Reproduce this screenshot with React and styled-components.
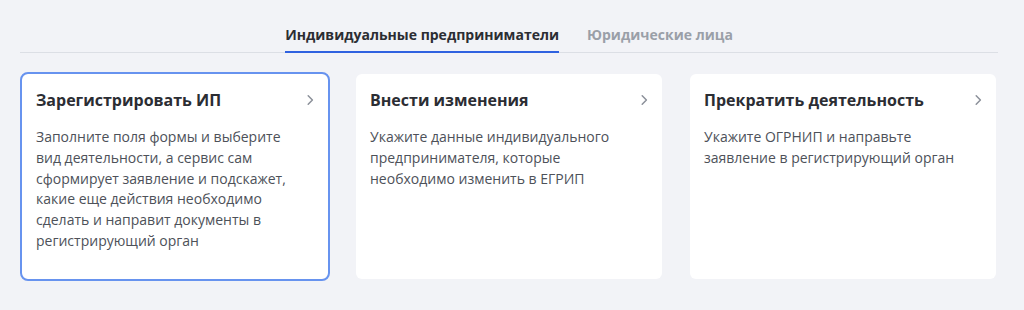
import React from 'react'
import styled, { createGlobalStyle } from 'styled-components'

const GlobalStyle = createGlobalStyle`
  body {
    margin: 0;
    background-color: #f2f3f7;
    font-family: 'Open Sans', 'Noto Sans', sans-serif;
  }
`

const tabs = ['Индивидуальные предприниматели', 'Юридические лица']

const cards = [
  {
    title: 'Зарегистрировать ИП',
    text: 'Заполните поля формы и выберите вид деятельности, а сервис сам сформирует заявление и подскажет, какие еще действия необходимо сделать и направит документы в регистрирующий орган',
  },
  {
    title: 'Внести изменения',
    text: 'Укажите данные индивидуального предпринимателя, которые необходимо изменить в ЕГРИП',
  },
  {
    title: 'Прекратить деятельность',
    text: 'Укажите ОГРНИП и направьте заявление в регистрирующий орган',
  },
]

const Chevron = () => (
  <svg width="8" height="12" viewBox="0 0 8 12" fill="none">
    <path d="M2.2 1.8L6.4 6L2.2 10.2" stroke="#8b9099" strokeWidth="1.5" strokeLinecap="round" strokeLinejoin="round" />
  </svg>
)

export default function App() {
  const [tab, setTab] = React.useState(0)
  const [active, setActive] = React.useState(0)

  return (
    <Page>
      <GlobalStyle />
      <Tabs>
        {tabs.map((t, i) => (
          <Tab key={t} $active={i === tab} onClick={() => setTab(i)}>
            {t}
          </Tab>
        ))}
      </Tabs>
      <Grid>
        {cards.map((c, i) => (
          <Card key={c.title} $active={i === active} onClick={() => setActive(i)}>
            <CardHead>
              <Title>{c.title}</Title>
              <Chevron />
            </CardHead>
            <Text>{c.text}</Text>
          </Card>
        ))}
      </Grid>
    </Page>
  )
}

const Page = styled.div`
  padding: 18px 26px 0 20px;
`

const Tabs = styled.div`
  display: flex;
  justify-content: center;
  gap: 28px;
  border-bottom: 1px solid #dcdfe5;
`

const Tab = styled.div`
  padding: 7px 0 6px;
  font-size: 14px;
  font-weight: 700;
  line-height: 20px;
  color: ${p => (p.$active ? '#2b2d33' : '#9a9fa8')};
  border-bottom: 2px solid ${p => (p.$active ? '#2f62e0' : 'transparent')};
  margin-bottom: -1px;
  cursor: pointer;
`

const Grid = styled.div`
  display: grid;
  grid-template-columns: repeat(3, 1fr);
  gap: 24px;
  margin-top: 19px;
`

const Card = styled.div`
  height: 209px;
  box-sizing: border-box;
  padding: 14px 14px 16px 14px;
  border: 2px solid ${p => (p.$active ? '#6793ef' : 'transparent')};
  border-radius: 8px;
  background-color: #fff;
  background-clip: padding-box;
  cursor: pointer;
`

const CardHead = styled.div`
  display: flex;
  justify-content: space-between;
  align-items: center;
  margin-bottom: 15px;
`

const Title = styled.div`
  font-size: 16px;
  font-weight: 700;
  line-height: 24px;
  color: #2b2d33;
`

const Text = styled.div`
  max-width: 258px;
  font-size: 14px;
  line-height: 20.8px;
  color: #4d5159;
`
